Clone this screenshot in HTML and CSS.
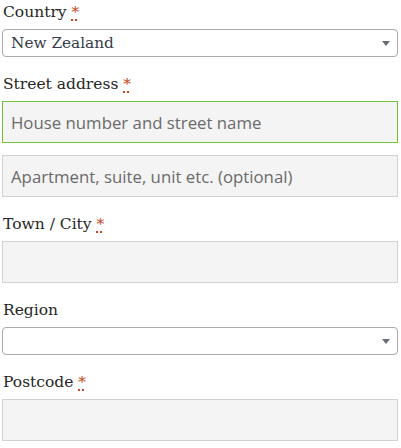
FILE: index.html
```html
<!DOCTYPE html>
<html>
<head>
<meta charset="utf-8">
<link rel="stylesheet" href="styles.css">
</head>
<body>
<form class="fields">
  <div class="row">
    <label class="lbl">Country <abbr class="req">*</abbr></label>
    <div class="sel"><span class="sel-text">New Zealand</span><span class="arrow"></span></div>
  </div>
  <div class="row">
    <label class="lbl">Street address <abbr class="req">*</abbr></label>
    <div class="stack">
      <input class="inp focus" placeholder="House number and street name">
      <input class="inp" placeholder="Apartment, suite, unit etc. (optional)">
    </div>
  </div>
  <div class="row">
    <label class="lbl">Town / City <abbr class="req">*</abbr></label>
    <input class="inp">
  </div>
  <div class="row">
    <label class="lbl">Region</label>
    <div class="sel"><span class="sel-text"></span><span class="arrow"></span></div>
  </div>
  <div class="row">
    <label class="lbl">Postcode <abbr class="req">*</abbr></label>
    <input class="inp">
  </div>
</form>
</body>
</html>
```
FILE: styles.css
```css
html, body {
  margin: 0;
  padding: 0;
  background: #fff;
}
body {
  padding-left: 2px;
}
.fields {
  width: 396px;
  display: flex;
  flex-direction: column;
  gap: 15px;
}
.row {
  display: flex;
  flex-direction: column;
}
.lbl {
  font-family: "DejaVu Serif", serif;
  font-size: 15.5px;
  line-height: 25px;
  height: 24px;
  color: #262626;
  margin-bottom: 5px;
  padding-left: 1px;
}
.req {
  color: #c8481b;
  text-decoration: underline dotted #c8481b;
  text-decoration-thickness: 2px;
  text-underline-offset: 2px;
}
.sel {
  box-sizing: border-box;
  height: 28px;
  border: 1px solid #aaa;
  border-radius: 4px;
  background: #fff;
  display: flex;
  align-items: center;
  justify-content: space-between;
  padding: 0 7px 0 8px;
}
.sel-text {
  font-family: "DejaVu Serif", serif;
  font-size: 15.3px;
  color: #363b47;
  line-height: 26px;
}
.arrow {
  width: 0;
  height: 0;
  border-left: 4px solid transparent;
  border-right: 4px solid transparent;
  border-top: 5px solid #666c78;
  margin-top: 1px;
}
.stack {
  display: flex;
  flex-direction: column;
  gap: 12px;
}
.inp {
  box-sizing: border-box;
  width: 396px;
  height: 42px;
  margin: 0;
  border: 1px solid #d1d1d1;
  background: #f4f4f4;
  padding: 0 8px;
  font-family: "Open Sans", sans-serif;
  font-size: 16.8px;
  color: #333;
  outline: none;
}
.inp::placeholder {
  color: #6a6a6a;
  opacity: 1;
}
.inp.focus {
  border-color: #74c13b;
}
```
